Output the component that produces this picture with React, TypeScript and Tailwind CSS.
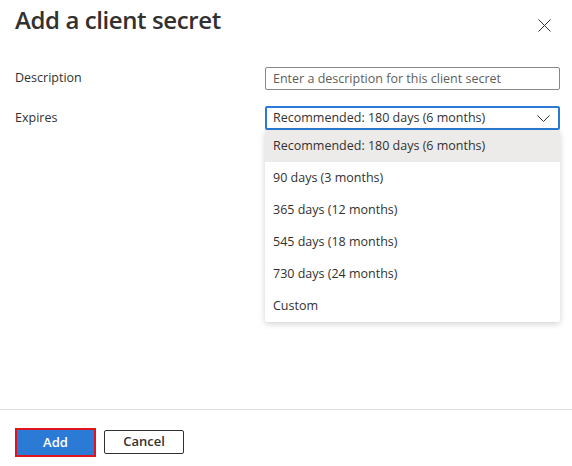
const options = [
  'Recommended: 180 days (6 months)',
  '90 days (3 months)',
  '365 days (12 months)',
  '545 days (18 months)',
  '730 days (24 months)',
  'Custom',
];

export default function App() {
  return (
    <div className="w-[572px] h-[466px] bg-white flex flex-col text-[#323130] font-['Open_Sans',sans-serif] overflow-hidden">
      <div className="flex items-start justify-between pl-[15px] pr-[21px] pt-[3px] h-[56px]">
        <h1 className="text-[24px] font-semibold leading-[34px] tracking-[-0.4px]">Add a client secret</h1>
        <button className="mt-[15px] w-[14px] h-[14px] flex items-center justify-center text-[#323130]">
          <svg width="13" height="13" viewBox="0 0 13 13" fill="none" stroke="currentColor" strokeWidth="1">
            <path d="M0.5 0.5 L12.5 12.5 M12.5 0.5 L0.5 12.5" />
          </svg>
        </button>
      </div>

      <div className="pl-[15px] pr-[12px] flex flex-col gap-[16px] mt-[11px]">
        <div className="flex items-center">
          <label className="w-[250px] shrink-0 text-[12.5px]">Description</label>
          <input
            className="w-[295px] h-[23px] border border-[#8a8886] rounded-[2px] px-[7px] text-[12.5px] outline-none placeholder:text-[#605e5c]"
            placeholder="Enter a description for this client secret"
          />
        </div>
        <div className="flex items-center">
          <label className="w-[250px] shrink-0 text-[12.5px]">Expires</label>
          <div className="relative">
            <div className="w-[295px] h-[24px] border-2 border-[#2b7bd6] rounded-[2px] pl-[6px] pr-[8px] flex items-center justify-between text-[12.5px]">
              <span>Recommended: 180 days (6 months)</span>
              <svg width="13" height="7" viewBox="0 0 13 7" fill="none" stroke="#323130" strokeWidth="1">
                <path d="M0.5 0.5 L6.5 6.5 L12.5 0.5" />
              </svg>
            </div>
            <ul className="absolute left-0 top-[24px] w-[295px] bg-white shadow-[0_2px_6px_rgba(0,0,0,0.18)] rounded-[2px]">
              {options.map((o, i) => (
                <li
                  key={o}
                  className={'h-[32px] flex items-center px-[8px] text-[12.5px] ' + (i === 0 ? 'bg-[#edebe9]' : '')}
                >
                  {o}
                </li>
              ))}
            </ul>
          </div>
        </div>
      </div>

      <div className="flex-1" />

      <div className="border-t border-[#e1dfdd] h-[57px] flex items-start gap-[8px] px-[15px] pt-[18px]">
        <button className="w-[81px] h-[29px] border-2 border-[#e0141e] bg-[#2b7bd6] text-white text-[13px] font-semibold flex items-center justify-center">
          Add
        </button>
        <button className="w-[80px] h-[24px] mt-[2px] border border-[#323130] rounded-[2px] bg-white text-[13px] font-semibold flex items-center justify-center">
          Cancel
        </button>
      </div>
    </div>
  );
}
